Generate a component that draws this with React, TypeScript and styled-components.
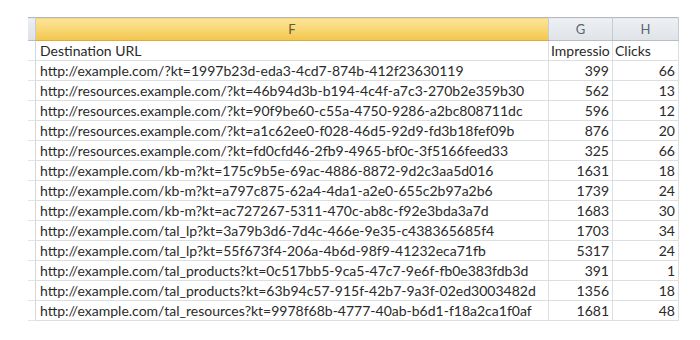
import React from 'react'
import styled, { createGlobalStyle } from 'styled-components'

const GlobalStyle = createGlobalStyle`
  html, body {
    margin: 0;
    padding: 0;
    background: #ffffff;
  }
  body {
    width: 700px;
    height: 340px;
    overflow: hidden;
  }
`

const Page = styled.div`
  padding: 17px 0 0 28px;
`

const Sheet = styled.table`
  border-collapse: collapse;
  table-layout: fixed;
  width: 648px;
  font-family: Lato, 'Liberation Sans', sans-serif;
  font-size: 14px;
  color: #2a2a2a;
  border-top: 1px solid #b4b8be;
`

const Corner = styled.th`
  width: 7px;
  height: 22px;
  padding: 0;
  background: linear-gradient(#eceef1, #dde1e6);
  border-right: 1px solid #c6cbd1;
  border-bottom: 1px solid #b9bec5;
`

const ColHead = styled.th<{ $active?: boolean; $w: number }>`
  width: ${(p) => p.$w}px;
  height: 22px;
  padding: 0;
  font-weight: normal;
  font-size: 13px;
  color: ${(p) => (p.$active ? '#6a5a30' : '#5b6573')};
  background: ${(p) =>
    p.$active
      ? 'linear-gradient(#fbe49c, #f8d570 55%, #f3c64c)'
      : 'linear-gradient(#eef0f3, #dfe3e8)'};
  border-right: 1px solid #c6cbd1;
  border-bottom: 1px solid ${(p) => (p.$active ? '#e2a93a' : '#b9bec5')};
`

const Gutter = styled.td`
  padding: 0;
  border-right: 1px solid #d4d7da;
  border-bottom: 1px solid #e2e4e6;
`

const Cell = styled.td<{ $num?: boolean }>`
  height: 19px;
  padding: 0 3px 0 4px;
  white-space: nowrap;
  overflow: hidden;
  text-align: ${(p) => (p.$num ? 'right' : 'left')};
  border-right: 1px solid #dcdfe2;
  border-bottom: 1px solid #dcdfe2;
  line-height: 19px;
`

const HeadCell = styled(Cell)`
  padding-left: 2px;
`

const rows: [string, number, number][] = [
  ['http://example.com/?kt=1997b23d-eda3-4cd7-874b-412f23630119', 399, 66],
  ['http://resources.example.com/?kt=46b94d3b-b194-4c4f-a7c3-270b2e359b30', 562, 13],
  ['http://resources.example.com/?kt=90f9be60-c55a-4750-9286-a2bc808711dc', 596, 12],
  ['http://resources.example.com/?kt=a1c62ee0-f028-46d5-92d9-fd3b18fef09b', 876, 20],
  ['http://resources.example.com/?kt=fd0cfd46-2fb9-4965-bf0c-3f5166feed33', 325, 66],
  ['http://example.com/kb-m?kt=175c9b5e-69ac-4886-8872-9d2c3aa5d016', 1631, 18],
  ['http://example.com/kb-m?kt=a797c875-62a4-4da1-a2e0-655c2b97a2b6', 1739, 24],
  ['http://example.com/kb-m?kt=ac727267-5311-470c-ab8c-f92e3bda3a7d', 1683, 30],
  ['http://example.com/tal_lp?kt=3a79b3d6-7d4c-466e-9e35-c438365685f4', 1703, 34],
  ['http://example.com/tal_lp?kt=55f673f4-206a-4b6d-98f9-41232eca71fb', 5317, 24],
  ['http://example.com/tal_products?kt=0c517bb5-9ca5-47c7-9e6f-fb0e383fdb3d', 391, 1],
  ['http://example.com/tal_products?kt=63b94c57-915f-42b7-9a3f-02ed3003482d', 1356, 18],
  ['http://example.com/tal_resources?kt=9978f68b-4777-40ab-b6d1-f18a2ca1f0af', 1681, 48],
]

const App = () => (
  <Page>
    <GlobalStyle />
    <Sheet>
      <thead>
        <tr>
          <Corner />
          <ColHead $active $w={512}>F</ColHead>
          <ColHead $w={63}>G</ColHead>
          <ColHead $w={65}>H</ColHead>
        </tr>
      </thead>
      <tbody>
        <tr>
          <Gutter />
          <Cell>Destination URL</Cell>
          <HeadCell>Impressio</HeadCell>
          <HeadCell>Clicks</HeadCell>
        </tr>
        {rows.map(([url, imp, clicks]) => (
          <tr key={url}>
            <Gutter />
            <Cell>{url}</Cell>
            <Cell $num>{imp}</Cell>
            <Cell $num>{clicks}</Cell>
          </tr>
        ))}
      </tbody>
    </Sheet>
  </Page>
)

export default App
